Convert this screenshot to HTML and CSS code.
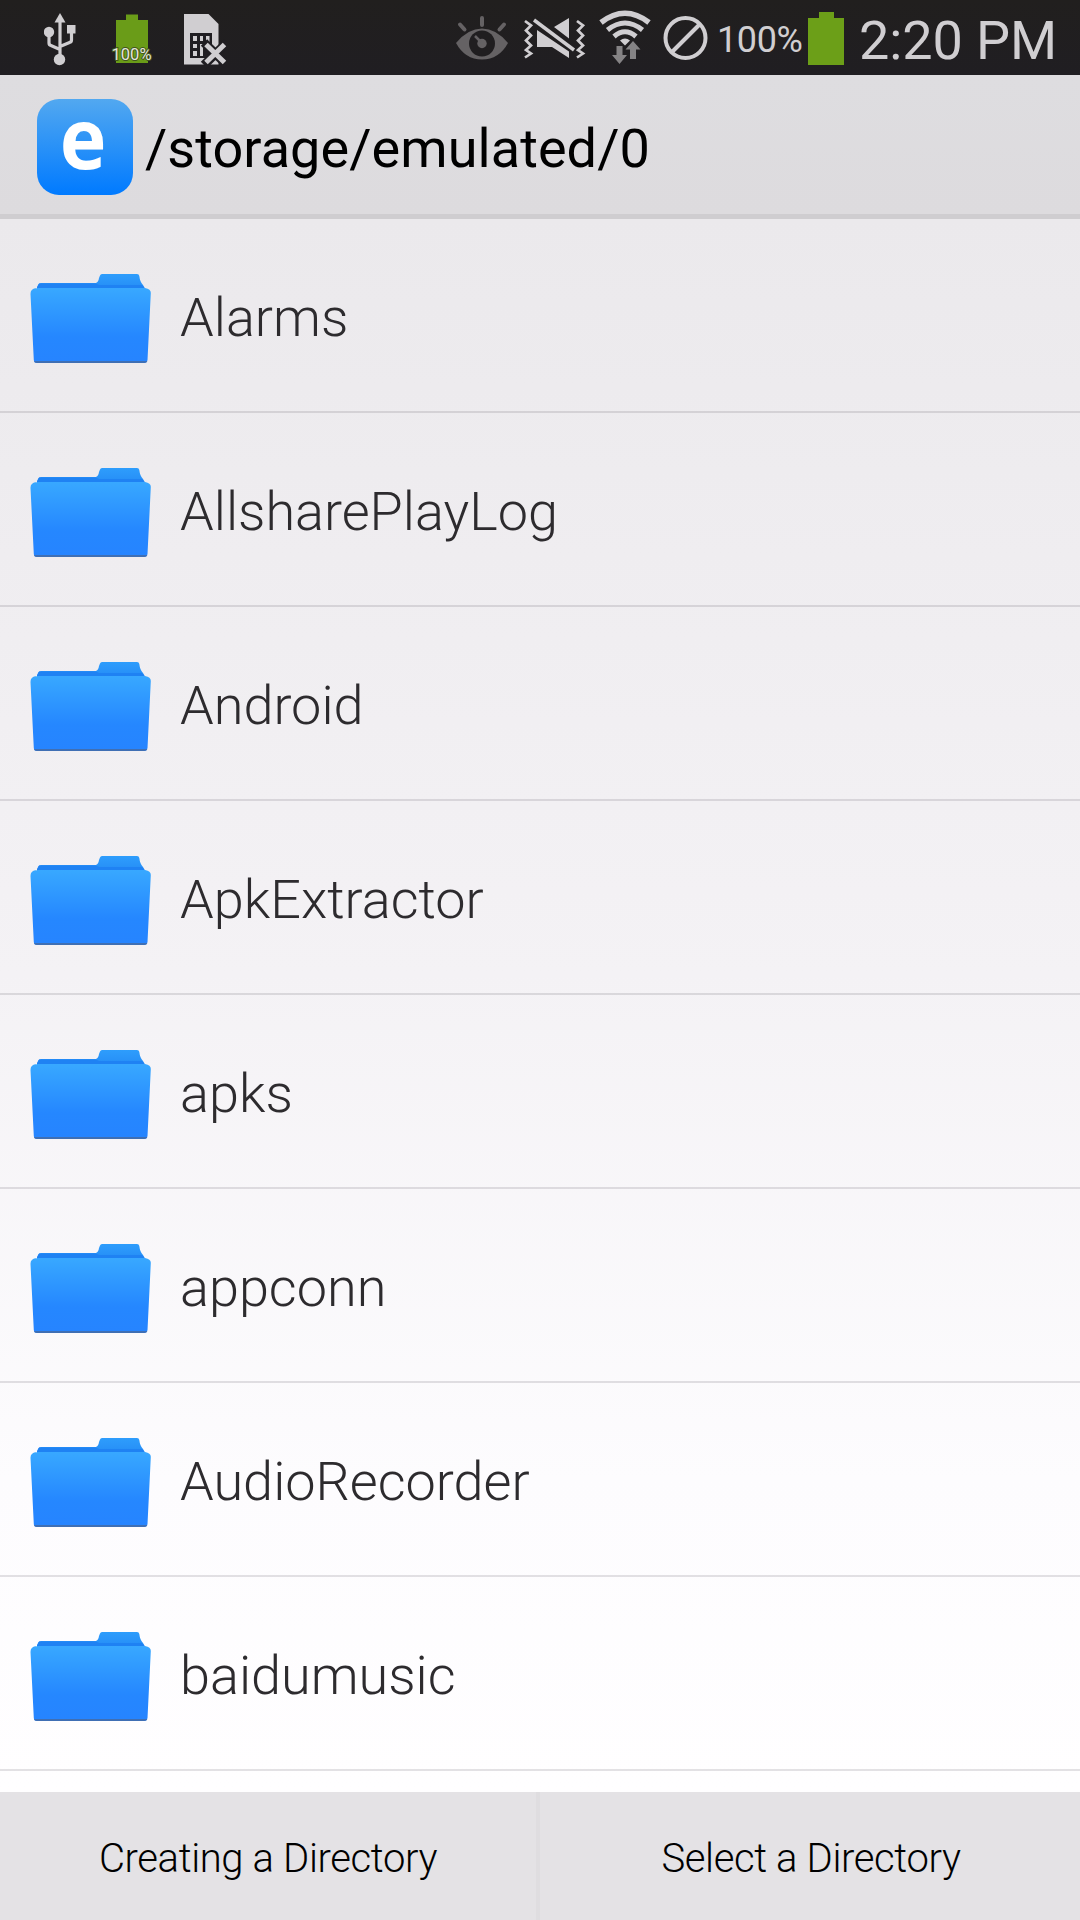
FILE: index.html
```html
<!DOCTYPE html>
<html lang="en">
<head>
<meta charset="utf-8">
<title>Directories</title>
<link rel="stylesheet" href="styles.css">
</head>
<body>
<svg class="defs" width="0" height="0" aria-hidden="true">
  <defs>
    <linearGradient id="front" x1="0" y1="0" x2="0" y2="1"><stop offset="0" stop-color="#38a8ff"/><stop offset=".65" stop-color="#2587ff"/><stop offset="1" stop-color="#2684ff"/></linearGradient>
    <linearGradient id="tab" x1="0" y1="0" x2="0" y2="1"><stop offset="0" stop-color="#2e9dfc"/><stop offset=".65" stop-color="#2892f8"/><stop offset="1" stop-color="#1c7cf0"/></linearGradient>
    <symbol id="folder" viewBox="0 0 122 92">
      <path d="M7 16 L8 11 Q9 9 11 9 H66 Q68.500 8 69 4 L70 1.500 Q70.500 0 72 0 H107 Q109 0 109.300 2 Q110 8 113 11 L116 16 Z" fill="url(#tab)"/>
      <path d="M7 13 L9 9.500 H66 L69 11 H112 L116 17 H7 Z" fill="#1f82f3"/>
      <path d="M4 17 Q5 14 8 14 H115 Q121 15 120.800 19 L117.500 86 Q117 89 114 89 H7 Q4 89 3.800 86 L.5 20 Q.3 15 6 14 Z" fill="url(#front)"/>
      <path d="M4 87 Q4.300 89 7 89 H114 Q117 89 117.300 87 Z" fill="#3f6fb4"/>
    </symbol>
  </defs>
</svg>
<div class="screen">
  <header class="status">
    <div class="notifications">
      <svg class="icon" width="32" height="75" viewBox="44 0 32 75" fill="#d0ced1" stroke="#d0ced1"><path d="M60 13 L65.500 22.500 H54.500 Z" stroke="none"/><path d="M60 20 V55 M49 33 V43 Q49 45 51 45.500 L60 49.500 M71.500 30 V40 Q71.500 42 69.500 42.500 L60 46.500" fill="none" stroke-width="3.200"/><circle cx="49" cy="32" r="5.200" stroke="none"/><circle cx="59.500" cy="59.500" r="5.700" stroke="none"/><path d="M67 25 H75.500 V33.500 H67 Z" stroke="none"/></svg>
      <svg class="icon battery-note" width="42" height="75" viewBox="111 0 42 75"><path d="M116 20 H126 V14.500 H138 V20 H148 V63 H116 Z" fill="#6a9c18"/><text class="note-text" x="111.500" y="60" textLength="40" lengthAdjust="spacingAndGlyphs">100%</text></svg>
      <svg class="icon" width="43" height="75" viewBox="184 0 43 75"><path d="M184 14 H208.500 L218.500 24 V64.500 H184 Z" fill="#d0ced1"/><path d="M190 33 H212 V58 H190 Z" fill="#201e22"/><path d="M193 36 H197 V41 H193 Z M193 44 H197 V48 H193 Z M193 51 H197 V56 H193 Z M200 36 H203 V41 H200 Z M200 44 H203 V56 H200 Z M206 36 H209.500 V45 L206 42 Z" fill="#d0ced1"/><path d="M204 42.500 L227 65 M204 65 L227 42.500" fill="none" stroke="#201e22" stroke-width="9"/><path d="M206 44.500 L224.500 62.500 M206 62.500 L224.500 44.500" fill="none" stroke="#d0ced1" stroke-width="5"/></svg>
    </div>
    <div class="system">
      <svg class="icon" width="53" height="75" viewBox="456 0 53 75"><g fill="none" stroke="#656264" stroke-width="4" stroke-linecap="round"><path d="M482 18 V25 M460 24.500 L464.500 29.500 M504 24.500 L499.500 29.500"/></g><path d="M456 43 Q468 28.500 482 28.500 Q496 28.500 508 43 Q499 59.500 482 59.500 Q465 59.500 456 43 Z" fill="#656264"/><circle cx="482" cy="43.500" r="13" fill="#201e20"/><circle cx="482" cy="43.500" r="4.700" fill="#656264"/><path d="M475 36 L482 43" stroke="#656264" stroke-width="2.500"/></svg>
      <svg class="icon mute" width="62" height="75" viewBox="524 0 62 75"><g fill="none" stroke="#d0ced1" stroke-width="2.700"><path d="M525 21 L531 25.500 L526 30.500 L531 35.500 L526 40.500 L531 45.500 L526 50 L531 53.500 L525 57.500"/><path d="M577 21 L583 25.500 L578 30.500 L583 35.500 L578 40.500 L583 45.500 L578 50 L583 53.500 L577 57.500"/></g><path d="M537 30 L569 51.500 V58 L552 47 H537 Z M554 27 L569 18 V38.500 Z" fill="#d0ced1"/><path d="M534 20 L574 50" stroke="#d0ced1" stroke-width="3.500"/></svg>
      <svg class="icon wifi" width="53" height="75" viewBox="599 0 53 75"><g fill="none" stroke="#d0ced1"><path d="M601 22.500 Q625 4 649 22.500" stroke-width="5.500"/><path d="M607.500 30 Q625 16 642.500 30" stroke-width="5"/><path d="M614 36.500 Q625 27 636 36.500" stroke-width="5"/></g><path d="M620 40.500 Q625 36.500 630 40.500 L625 45.500 Z" fill="#d0ced1"/><path d="M616.500 46 H622.500 V55 H627 L619.500 64 L612 55 H616.500 Z M630 59 V49.500 H625.500 L633 41 L640.500 49.500 H636 V59 Z" fill="#858385"/></svg>
      <svg class="icon blocked" width="46" height="75" viewBox="663 0 46 75" fill="none" stroke="#d0ced1" stroke-width="4"><circle cx="685.500" cy="38" r="20"/><path d="M672 52 L699.500 24.500"/></svg>
      <span class="percent">100%</span>
      <svg class="icon" width="36" height="75" viewBox="808 0 36 75"><path d="M808 18 H819 V12 H834 V18 H844 V65 H808 Z" fill="#6c9f18"/></svg>
      <time class="clock">2:20 PM</time>
    </div>
  </header>
  <div class="titlebar">
    <div class="app-icon"><span class="letter">e</span></div>
    <h1 class="path">/storage/emulated/0</h1>
  </div>
  <ul class="list">
    <li class="row"><svg class="folder"><use href="#folder"/></svg><span class="name">Alarms</span></li>
    <li class="row"><svg class="folder"><use href="#folder"/></svg><span class="name">AllsharePlayLog</span></li>
    <li class="row"><svg class="folder"><use href="#folder"/></svg><span class="name">Android</span></li>
    <li class="row"><svg class="folder"><use href="#folder"/></svg><span class="name">ApkExtractor</span></li>
    <li class="row"><svg class="folder"><use href="#folder"/></svg><span class="name">apks</span></li>
    <li class="row"><svg class="folder"><use href="#folder"/></svg><span class="name">appconn</span></li>
    <li class="row"><svg class="folder"><use href="#folder"/></svg><span class="name">AudioRecorder</span></li>
    <li class="row"><svg class="folder"><use href="#folder"/></svg><span class="name">baidumusic</span></li>
  </ul>
  <footer class="actions">
    <button class="action create">Creating a Directory</button>
    <button class="action select">Select a Directory</button>
  </footer>
</div>
</body>
</html>
```
FILE: styles.css
```css
* { box-sizing: border-box; }
body { margin: 0; font-family: Roboto, sans-serif; }
.defs { display: block; }
.screen { width: 1080px; height: 1920px; display: flex; flex-direction: column; overflow: hidden; background: #fff; }
.status { height: 75px; flex: none; display: flex; justify-content: space-between; padding: 0 26px 0 44px; background: linear-gradient(#211f1e, #201e22); color: #d0ced1; }
.notifications, .system { display: flex; align-items: center; }
.notifications { gap: 33px; }
.icon { display: block; flex: none; }
.battery-note { margin: 0 -2px 0 2px; }
.note-text { font-size: 17px; fill: #e4e6dc; stroke: #42551d; stroke-width: 2px; paint-order: stroke; }
.mute { margin-left: 15px; }
.wifi { margin-left: 13px; }
.blocked { margin-left: 11px; }
.percent { width: 99px; padding: 4px 0 0 8px; font-size: 36px; letter-spacing: -.4px; line-height: 42px; white-space: nowrap; }
.clock { width: 210px; padding: 7px 0 0 15px; font-size: 54px; letter-spacing: -.1px; line-height: 64px; white-space: nowrap; }
.titlebar { height: 144px; flex: none; display: flex; align-items: center; padding: 0 37px; border-bottom: 5px solid #cfcdd0; background: linear-gradient(#dedde0, #dddbde); }
.app-icon { width: 96px; height: 96px; border-radius: 22px; margin-top: 5px; background: linear-gradient(#52a8f0, #007aff); color: #fff; font: 700 85px/74px "Open Sans", sans-serif; text-align: center; padding-right: 3px; }
.letter { display: inline-block; transform: scaleX(.93); }
.path { margin: 9px 0 0 12px; font-size: 54px; font-weight: 400; letter-spacing: .07px; line-height: 64px; color: #000; }
.list { flex: 1; margin: 0; padding: 0; list-style: none; background: linear-gradient(#ebe9ec, #f4f2f5 48%, #fdfcfe 80%, #fffeff); }
.row { height: 194px; display: flex; align-items: center; padding: 10px 30px 0; border-bottom: 2px solid rgba(80, 75, 85, .16); }
.folder { width: 122px; height: 92px; }
.name { margin: 0 0 5px 28px; font-size: 54px; font-weight: 300; line-height: 64px; color: #2d2b2e; }
.actions { height: 128px; flex: none; display: grid; grid-template-columns: 536px 544px; background: #e4e2e5; }
.action { border: 0; padding: 5px 0 0; background: none; color: #000; font: 300 40px/48px Roboto, sans-serif; letter-spacing: -.37px; white-space: nowrap; }
.select { border-left: 4px solid #dfdde0; padding-left: 2px; }
```
